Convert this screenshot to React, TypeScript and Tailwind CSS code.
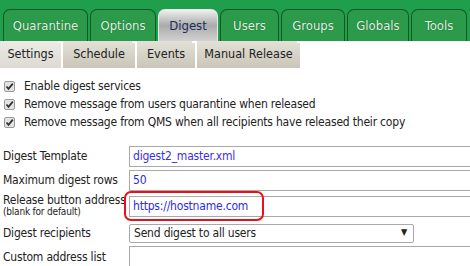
const font = "font-['DejaVu_Sans_Condensed','DejaVu_Sans',sans-serif]";

function TopTab({ label, active, w }: { label: string; active?: boolean; w: string }) {
  return (
    <div
      className={
        "h-[32px] flex items-center justify-center rounded-t-[7px] border border-b-0 text-[13px] " +
        w +
        (active
          ? " bg-gradient-to-b from-[#f0f0f0] via-[#ababab] to-[#d2d2d2] border-[#e8e8e8] text-[#1c2c5c]"
          : " bg-[#2b9a4b] border-[#0e5a22] text-[#e4f4e4] [text-shadow:0_0_1px_#0b4d1a]")
      }
    >
      {label}
    </div>
  );
}

function SubTab({ label, active, w }: { label: string; active?: boolean; w: string }) {
  return (
    <div
      className={
        "relative h-full flex items-center justify-center text-[12.5px] text-[#222] border-r-2 border-white " +
        w +
        (active ? " bg-gradient-to-b from-[#ecebe6] to-[#dcdad2]" : " bg-gradient-to-b from-[#e4e1d8] to-[#c9c5b8]")
      }
    >
      {label}
      <span className="absolute right-[-5px] top-0 w-[8px] h-[2px] bg-white" />
    </div>
  );
}

function Check({ label }: { label: string }) {
  return (
    <div className="flex items-center h-[18px]">
      <span className="ml-[4px] w-[11px] h-[11px] border border-[#9a9a9a] rounded-[2px] bg-[#e4e4e4] flex items-center justify-center">
        <svg width="9" height="9" viewBox="0 0 9 9">
          <path d="M1.5 4.5 L3.5 6.8 L7.8 1.6" stroke="#333" strokeWidth="1.8" fill="none" />
        </svg>
      </span>
      <span className="ml-[9px] text-[12px] text-[#222]">{label}</span>
    </div>
  );
}

export default function App() {
  return (
    <div className={"w-[470px] h-[266px] overflow-hidden bg-white tracking-[-0.2px] " + font}>
      <div className="h-[41px] bg-[#1f9e4c] flex items-end pl-[3px] gap-[2px] tracking-normal">
        <TopTab label="Quarantine" w="w-[85px]" />
        <TopTab label="Options" w="w-[66px]" />
        <TopTab label="Digest" w="w-[60px]" active />
        <TopTab label="Users" w="w-[59px]" />
        <TopTab label="Groups" w="w-[64px]" />
        <TopTab label="Globals" w="w-[62px]" />
        <TopTab label="Tools" w="w-[56px]" />
      </div>
      <div className="h-[27px] flex tracking-normal">
        <SubTab label="Settings" w="w-[63px]" active />
        <SubTab label="Schedule" w="w-[74px]" />
        <SubTab label="Events" w="w-[60px]" />
        <SubTab label="Manual Release" w="w-[105px]" />
      </div>
      <div className="pt-[9px]">
        <Check label="Enable digest services" />
        <Check label="Remove message from users quarantine when released" />
        <Check label="Remove message from QMS when all recipients have released their copy" />
      </div>
      <div className="mt-[13px] text-[12px] text-[#222]">
        <div className="flex items-center h-[24px]">
          <div className="w-[129px] pl-[3px]">Digest Template</div>
          <div className="flex-1 h-[21px] border border-r-0 border-[#a9a9a9] flex items-center pl-[3px] text-[#3a2ef0]">
            digest2_master.xml
          </div>
        </div>
        <div className="flex items-center h-[24px]">
          <div className="w-[129px] pl-[3px]">Maximum digest rows</div>
          <div className="flex-1 h-[21px] border border-r-0 border-[#a9a9a9] flex items-center pl-[3px] text-[#2a2af0]">
            50
          </div>
        </div>
        <div className="flex items-center h-[28px]">
          <div className="w-[129px] pl-[3px] leading-[12px] whitespace-nowrap">
            <div>Release button address</div>
            <div className="text-[10px]">(blank for default)</div>
          </div>
          <div className="relative flex-1 h-[21px] border border-r-0 border-[#a9a9a9] flex items-center pl-[3px] text-[#2a2af0]">
            https://hostname.com
            <div className="absolute left-[-6px] top-[-6px] w-[140px] h-[30px] border-2 border-[#e3121c] rounded-[7px]" />
          </div>
        </div>
        <div className="flex items-center h-[26px]">
          <div className="w-[129px] pl-[3px]">Digest recipients</div>
          <div className="w-[285px] h-[19px] border border-[#a9a9a9] rounded-[2px] flex items-center justify-between pl-[4px] pr-[6px]">
            <span>Send digest to all users</span>
            <span className="text-[9px]">▼</span>
          </div>
        </div>
        <div className="flex items-center h-[21px]">
          <div className="w-[129px] pl-[3px]">Custom address list</div>
          <div className="flex-1 h-[21px] border border-r-0 border-[#a9a9a9]" />
        </div>
      </div>
    </div>
  );
}
